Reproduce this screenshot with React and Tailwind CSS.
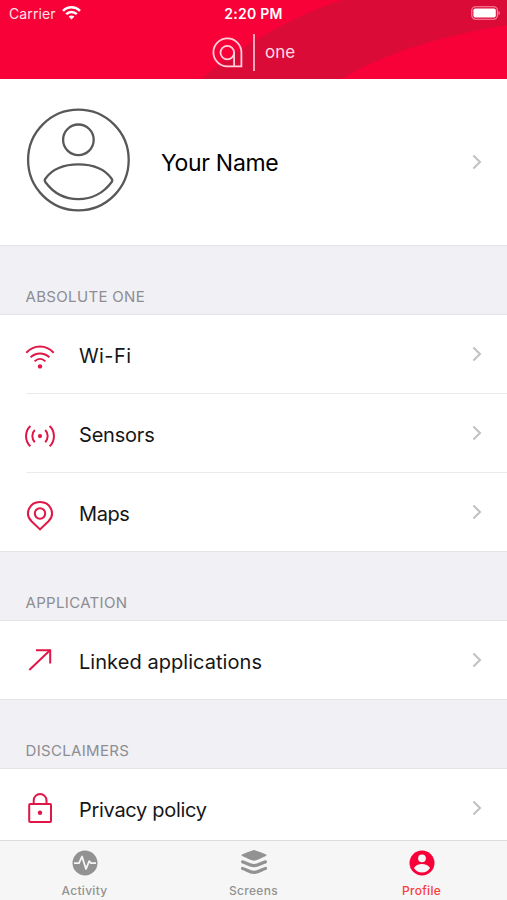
import React from "react";

const WifiIcon = () => (
  <>
    <path d="M2.3 18.8C10 10.4 22 10.4 29.7 18.8" />
    <path d="M6.6 23.3C12 18.1 20 18.1 25.4 23.3" />
    <path d="M10.6 27.4C13.8 24.3 18.2 24.3 21.4 27.4" />
    <circle cx="16" cy="32.4" r="2.2" fill="currentColor" stroke="none" />
  </>
);

const SensorsIcon = () => (
  <>
    <path d="M6.4 13C.6 18.5 .6 27.8 6.4 33.3" />
    <path d="M10.8 17C7.5 20.2 7.5 26 10.8 29.2" />
    <path d="M25.6 13c5.8 5.5 5.8 14.8 0 20.3" />
    <path d="M21.2 17c3.3 3.2 3.3 9 0 12.2" />
    <circle cx="16" cy="23.1" r="2.1" fill="currentColor" stroke="none" />
  </>
);

const MapIcon = () => (
  <>
    <path d="M16 37.4L7.5 29.3C0 21.5 5.6 10 16 10s16 11.5 8.5 19.3L16 37.4z" />
    <circle cx="16" cy="21.5" r="5.2" />
  </>
);

const LinkIcon = () => (
  <>
    <path d="M5.3 30L26 10.2" />
    <path d="M12 10.2H26.2V23.4" />
  </>
);

const LockIcon = () => (
  <>
    <rect x="5.2" y="16" width="21.8" height="18" rx="1" />
    <path d="M9.7 16V12.4a6.4 6.4 0 0 1 12.8 0V16" />
    <circle cx="16" cy="24.8" r="2.2" fill="currentColor" stroke="none" />
  </>
);

const Chevron = () => (
  <svg className="w-[10px] h-[16px] mr-[25px] shrink-0" viewBox="0 0 10 16" fill="none" stroke="#c2c2c2" strokeWidth="2.1">
    <path d="M1.4 1.5L8 8L1.4 14.5" />
  </svg>
);

const SectionTitle = ({ children }) => (
  <div className="h-[69px] shrink-0 bg-[#f0f0f5] border-t border-[#e3e3e5] pl-[25.5px] pt-[41px] text-[15px] leading-[20px] tracking-[0.33px] text-[#8d8d92] font-['Inter',sans-serif]">
    {children}
  </div>
);

const Row = ({ icon, label, labelClass, first }) => (
  <div className={`relative h-[79px] shrink-0 bg-white flex items-center ${first ? "border-t border-[#e3e3e5] pb-px" : "pt-px"}`}>
    {!first && <div className="absolute top-0 left-[26px] right-0 h-px bg-[#ebebec]" />}
    <svg className="w-[32px] h-[40px] ml-[24px] shrink-0 text-[#e01648]" viewBox="0 0 32 40" fill="none" stroke="currentColor" strokeWidth="2">
      {icon}
    </svg>
    <span className={`ml-[23px] pt-[4px] flex-1 text-[20px] leading-[26px] text-[#161616] ${labelClass}`}>{label}</span>
    <Chevron />
  </div>
);

const Header = () => (
  <header className="relative h-[79px] shrink-0 bg-[#f80038] text-white overflow-hidden">
    <svg className="absolute inset-0 w-full h-full" viewBox="0 0 507 79">
      <path d="M201 79C240 47 290 17 342 0H507V25C440 36 385 53 341 79z" fill="#db0b38" />
    </svg>

    {/* Status bar */}
    <div className="relative h-[28px] grid grid-cols-3 items-center font-['Inter',sans-serif]">
      <div className="flex items-center pl-[9px] gap-[6px]">
        <span className="text-[14px] leading-[20px] tracking-[0.1px] text-[#ffe3e8]">Carrier</span>
        <svg className="w-[19px] h-[14px] mb-[2px]" viewBox="0 0 19 14" fill="none" stroke="#fff" strokeWidth="2.5">
          <path d="M1 4.8C5.8 .1 13.2 .1 18 4.8" />
          <path d="M4.2 8.1C7.2 5.2 11.8 5.2 14.8 8.1" />
          <path d="M9.5 13.6L6.6 10.6C8.2 9.1 10.8 9.1 12.4 10.6z" fill="#fff" stroke="none" />
        </svg>
      </div>
      <span className="text-center text-[14px] leading-[20px] font-semibold tracking-[0.25px]">2:20 PM</span>
      <svg className="w-[30px] h-[14px] justify-self-end mr-[6px] mb-[2px]" viewBox="0 0 30 14">
        <rect x="0.8" y="0.8" width="25.6" height="12.4" rx="3.6" fill="none" stroke="#ff8fa5" strokeWidth="1.1" />
        <rect x="2.4" y="2.4" width="22.4" height="9.2" rx="1.8" fill="#fff" />
        <path d="M27.5 5v4.2c1.8-.6 1.8-3.6 0-4.2z" fill="#ff8fa5" />
      </svg>
    </div>

    {/* Logo */}
    <div className="relative flex items-center h-[48px] pl-[211px]">
      <svg className="w-[32px] h-[32px]" viewBox="0 0 32 32" fill="none" stroke="#ffd0da" strokeWidth="1.8">
        <path d="M30.4 30.4H16.2A14 14 0 1 1 30.4 16.4z" />
        <circle cx="16.3" cy="16.6" r="6.8" />
        <path d="M23.1 16.6V30.4" />
      </svg>
      <div className="w-[2px] h-[37px] ml-[10px] bg-[#f9a4b6]" />
      <span className="ml-[10px] text-[17px] leading-[22px] font-['Inter',sans-serif] text-[#ffdbe2]">one</span>
    </div>
  </header>
);

const Tab = ({ label, active, children }) => (
  <div className={`flex flex-col items-center pt-[8px] ${active ? "text-[#f80038] pr-[2px]" : "text-[#929292]"}`}>
    <svg className="w-[28px] h-[28px]" viewBox="0 0 28 28">{children}</svg>
    <span className={`mt-[6px] text-[12px] leading-[16px] font-medium tracking-[0.3px] ${active ? "text-[#fa3c3c]" : ""}`}>{label}</span>
  </div>
);

const App = () => {
  return (
    <div className="w-[507px] h-[900px] flex flex-col overflow-hidden bg-white font-['Inter',sans-serif]">
      <Header />

      <main className="flex-1 min-h-0 overflow-hidden flex flex-col">
        {/* Profile */}
        <div className="h-[166px] shrink-0 flex items-center">
          <svg className="w-[104px] h-[104px] ml-[26px] mb-[4px] shrink-0" viewBox="0 0 104 104" fill="none" stroke="#58585a" strokeWidth="2.3">
            <circle cx="52.4" cy="52" r="50.3" />
            <circle cx="52.4" cy="31.8" r="15.3" />
            <path d="M19.5 70.5C26 61.5 37.5 56.4 52.4 56.4S79 61.5 85.5 70.5Q87 72.3 85.5 74.3C78 84.5 66 91.2 52.4 91.2S27 84.5 19.5 74.3Q18 72.3 19.5 70.5z" />
          </svg>
          <span className="ml-[31px] pt-[2px] flex-1 text-[23px] leading-[30px] tracking-[-0.3px] text-black">Your Name</span>
          <Chevron />
        </div>

        <SectionTitle>ABSOLUTE ONE</SectionTitle>
        <Row first icon={<WifiIcon />} label="Wi-Fi" labelClass="tracking-[0.4px]" />
        <Row icon={<SensorsIcon />} label="Sensors" labelClass="tracking-[-0.2px]" />
        <Row icon={<MapIcon />} label="Maps" labelClass="tracking-[-0.4px]" />

        <SectionTitle>APPLICATION</SectionTitle>
        <Row first icon={<LinkIcon />} label="Linked applications" labelClass="tracking-[0.05px]" />

        <SectionTitle>DISCLAIMERS</SectionTitle>
        <Row first icon={<LockIcon />} label="Privacy policy" labelClass="tracking-[-0.3px]" />
      </main>

      {/* Bottom tabs */}
      <nav className="h-[60px] shrink-0 grid grid-cols-3 bg-[#f6f6f6] border-t border-[#dcdcdc]">
        <Tab label="Activity">
          <circle cx="14" cy="14" r="12.5" fill="currentColor" />
          <path d="M3 14.2H8L11 7.5L15 20L18.2 12.2L20 14.2H25" fill="none" stroke="#f6f6f6" strokeWidth="1.8" strokeLinejoin="round" />
        </Tab>
        <Tab label="Screens">
          <path d="M14 1C18 2 22 4 26 5.6Q27 6.3 26 7C22 8.6 18 11 14 11.8C10 11 6 8.6 2 7Q1 6.3 2 5.6C6 4 10 2 14 1z" fill="currentColor" />
          <path d="M2.6 12.9C6.5 13.9 9.5 16.6 14 16.6S21.5 13.9 25.4 12.9M2.6 19.5C6.5 20.5 9.5 23.4 14 23.4S21.5 20.5 25.4 19.5" fill="none" stroke="currentColor" strokeWidth="3.2" strokeLinecap="round" />
        </Tab>
        <Tab label="Profile" active>
          <circle cx="14" cy="14" r="12.5" fill="currentColor" />
          <circle cx="14" cy="9.3" r="3.9" fill="#f6f6f6" />
          <path d="M6 19C8.7 13.6 19.3 13.6 22 19C18.5 25.1 9.5 25.1 6 19z" fill="#f6f6f6" />
        </Tab>
      </nav>
    </div>
  );
};

export default App;
